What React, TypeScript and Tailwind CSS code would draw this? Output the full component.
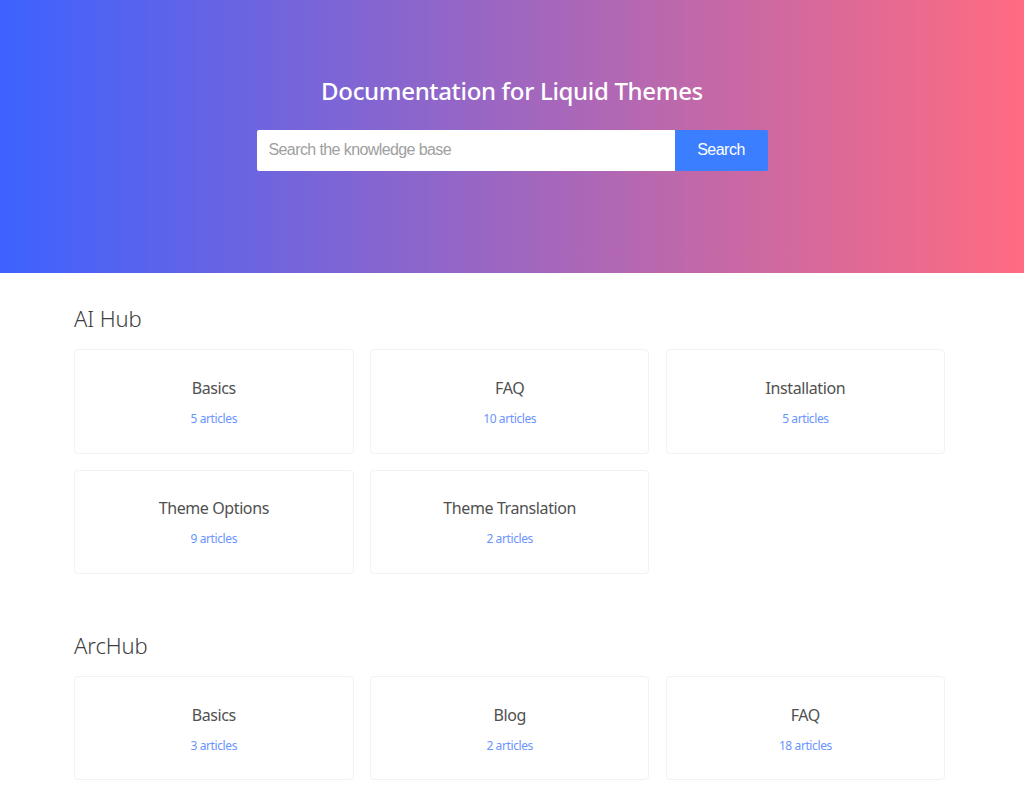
const font = "font-['Noto_Sans','Open_Sans',sans-serif]";

function Card({ title, count }: { title: string; count: string }) {
  return (
    <a className="flex h-[104.6px] flex-col items-center rounded-[4px] border border-[#f2f2f2] bg-white pt-[24.8px]">
      <span className="text-[16px] leading-[26px] tracking-[-0.4px] text-[#505050]">{title}</span>
      <span className="mt-[8px] text-[12px] leading-[20px] tracking-[-0.4px] text-[#6a94ff]">{count}</span>
    </a>
  );
}

function Section({ title, items, className }: { title: string; items: [string, string][]; className?: string }) {
  return (
    <section className={className}>
      <h2 className="text-[22px] font-light leading-[30px] tracking-[-0.1px] text-[#3f3f3f]">{title}</h2>
      <div className="mt-[16px] grid grid-cols-[279.6px_279.2px_279.2px] gap-x-[16.5px] gap-y-[16px]">
        {items.map(([t, c], i) => (
          <Card key={i} title={t} count={c} />
        ))}
      </div>
    </section>
  );
}

export default function App() {
  return (
    <div className={`${font} h-[789px] overflow-hidden bg-white`}>
      <header className="flex h-[273px] flex-col items-center bg-linear-to-r/srgb from-[#3d62ff] to-[#ff6b81] pt-[72px]">
        <h1 className="text-[24px] font-medium leading-[37px] tracking-[-0.33px] text-white">Documentation for Liquid Themes</h1>
        <form className="mt-[21px] flex h-[41px] w-[511px] overflow-hidden rounded-[2px]">
          <input
            placeholder="Search the knowledge base"
            className="min-w-0 flex-1 bg-white px-[12px] pb-[2px] font-['Liberation_Sans',sans-serif] text-[16px] tracking-[-0.6px] text-[#333] outline-none placeholder:text-[#a0a0a0]"
          />
          <button type="button" className="w-[93px] bg-[#3b7eff] pb-[2px] font-['Liberation_Sans',sans-serif] text-[16px] tracking-[-0.5px] text-white">
            Search
          </button>
        </form>
      </header>
      <main className="pl-[74px] pt-[30px]">
        <Section
          title="AI Hub"
          items={[
            ["Basics", "5 articles"],
            ["FAQ", "10 articles"],
            ["Installation", "5 articles"],
            ["Theme Options", "9 articles"],
            ["Theme Translation", "2 articles"],
          ]}
        />
        <Section
          className="mt-[55.6px]"
          title="ArcHub"
          items={[
            ["Basics", "3 articles"],
            ["Blog", "2 articles"],
            ["FAQ", "18 articles"],
          ]}
        />
      </main>
    </div>
  );
}
